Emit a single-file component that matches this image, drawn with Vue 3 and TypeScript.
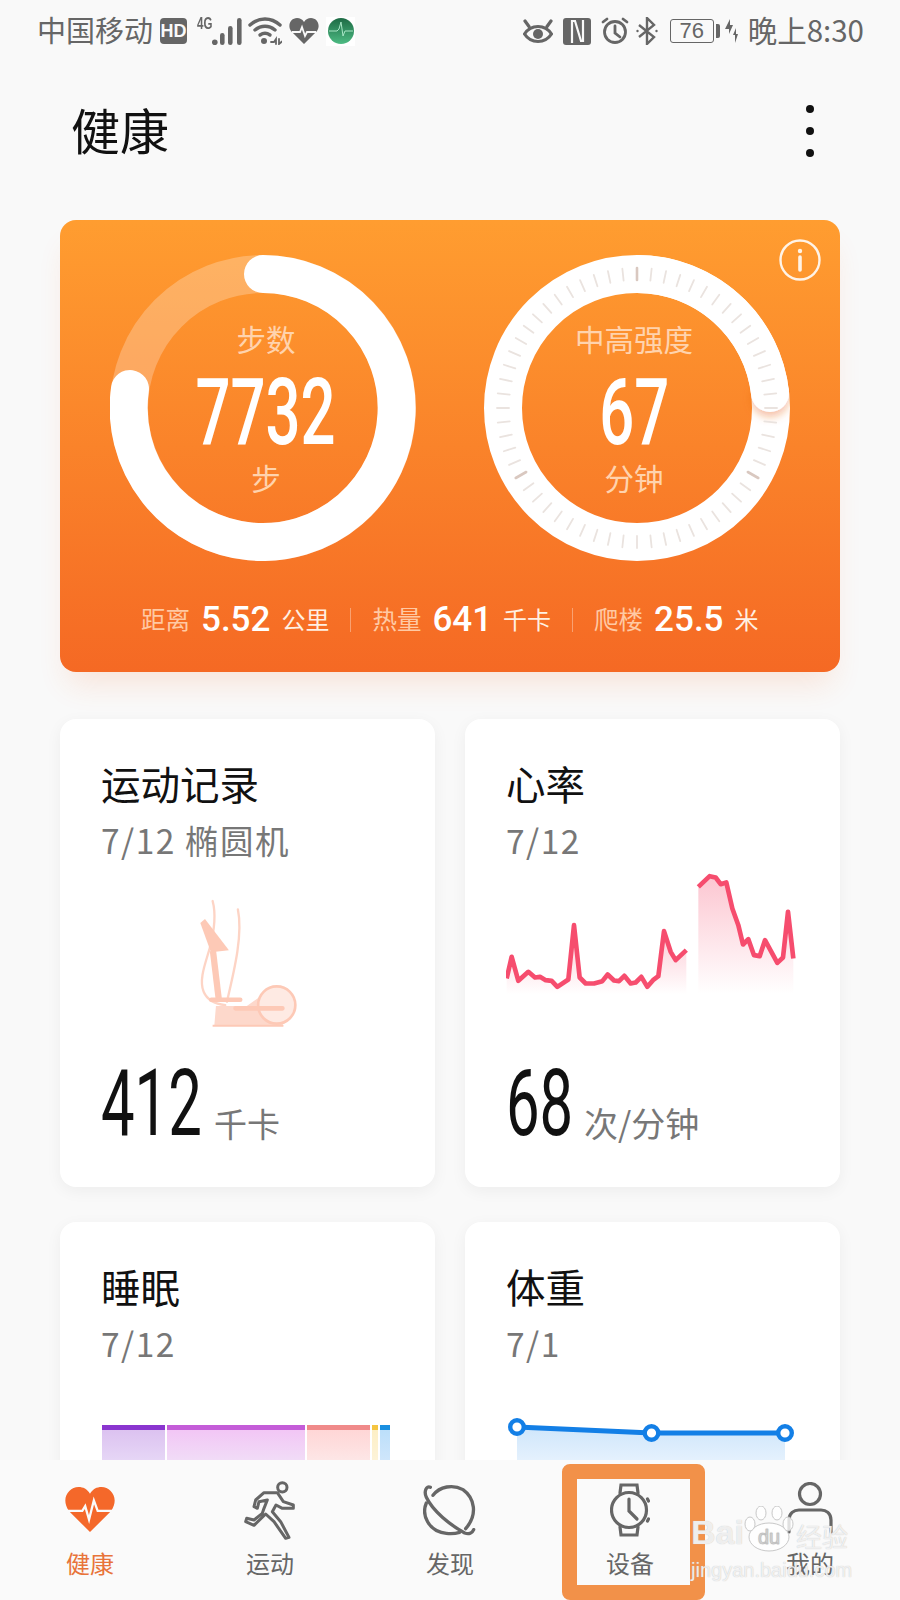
<script setup lang="ts">
interface Tick {
  x1: number
  y1: number
  x2: number
  y2: number
  major: boolean
}

const stats = [
  { label: '距离', value: '5.52', unit: '公里' },
  { label: '热量', value: '641', unit: '千卡' },
  { label: '爬楼', value: '25.5', unit: '米' },
]

// 60 ticks round the dial, heavier ones at 12, 4 and 8 o'clock
const ticks: Tick[] = Array.from({ length: 60 }, (_, i) => {
  const a = (i * 6 * Math.PI) / 180
  const s = Math.sin(a)
  const c = Math.cos(a)
  return {
    x1: 153 + 128 * s,
    y1: 153 - 128 * c,
    x2: 153 + 140 * s,
    y2: 153 - 140 * c,
    major: i % 20 === 0,
  }
})

const heartLeft =
  '113,385 128,320 148,392 178,365 198,382 213,380 230,390 248,392 265,410 298,388 315,225 332,382 350,400 375,400 400,393 416,373 435,391 450,393 466,377 485,400 500,397 517,380 535,410 552,390 568,378 585,243 605,305 620,330 652,300'
const heartRight =
  '688,110 722,78 740,82 755,102 772,97 790,175 808,225 822,283 838,267 855,315 872,318 888,270 925,338 942,322 957,185 973,325'

const sleepBars = [
  { width: 63, top: '#8a35cf', fill: '#dcc2f0', fade: '#e6d6f6' },
  { width: 138, top: '#c45cd8', fill: '#f2c6f5', fade: '#f1dcf7' },
  { width: 63, top: '#f08a8a', fill: '#ffd6d6', fade: '#fde6e6' },
  { width: 6, top: '#f5c540', fill: '#fdefc6', fade: '#fdf3d8' },
  { width: 10, top: '#1a8fe0', fill: '#bcdffa', fade: '#cfe6fb' },
]
</script>

<template>
  <div class="phone">
    <div class="status">
      <div class="status-side">
        <span class="carrier">中国移动</span>
        <span class="hd">HD</span>
        <span class="net">
          <i class="net-label">4G</i>
          <svg width="30" height="27" viewBox="0 0 30 27">
            <circle cx="2.8" cy="24.2" r="2.8" fill="#666" />
            <rect x="8" y="15" width="4.600" height="12" rx="2.300" fill="#666" />
            <rect x="16" y="8" width="4.600" height="19" rx="2.300" fill="#666" />
            <rect x="25" y="0" width="4.600" height="27" rx="2.300" fill="#666" />
          </svg>
        </span>
        <svg class="gap-wifi" width="34" height="28" viewBox="0 0 34 28" fill="none" stroke="#666" stroke-width="3.400" stroke-linecap="round">
          <path d="M2 8C11 0 23 0 32 8" />
          <path d="M7 13C13 8 21 8 27 13" />
          <path d="M12 18C15 16 19 16 22 18" />
          <circle cx="16" cy="24" r="3" fill="#666" stroke="none" />
          <path d="M23 25h3l2-3v5M31 22v5l3-2.500" stroke-width="1.800" />
        </svg>
        <svg width="30" height="26" viewBox="0 0 30 26">
          <path d="M15 26 2 13C-2 7 2 0 8 0c3 0 5 1 7 4 2-3 4-4 7-4 6 0 10 7 6 13Z" fill="#666" />
          <path d="M3 14h8l2-5 3 9 2-4h9" fill="none" stroke="#f9f9f9" stroke-width="1.800" />
        </svg>
        <span class="app-icon">
          <svg width="26" height="26" viewBox="0 0 26 26">
            <defs>
              <linearGradient id="radar" x1="0" y1="0" x2="0" y2="1">
                <stop offset="0" stop-color="#1d6a44" />
                <stop offset="1" stop-color="#4dbb83" />
              </linearGradient>
            </defs>
            <circle cx="13" cy="13" r="13" fill="url(#radar)" />
            <path d="M1 13h8l2-2 2-7 2 14 2-5h8" fill="none" stroke="#a8e6c6" stroke-width="1" />
          </svg>
        </span>
      </div>
      <div class="status-side">
        <svg width="30" height="27" viewBox="0 0 30 27" fill="none" stroke="#666" stroke-linecap="round">
          <path d="M1.500 16C8 6 22 6 28.500 16 22 26 8 26 1.500 16Z" stroke-width="3.200" />
          <circle cx="15" cy="16" r="5" fill="#666" stroke="none" />
          <path d="M2 3l4 5.500M28 3l-4 5.500" stroke-width="3.200" />
        </svg>
        <svg class="gap-n" width="28" height="27" viewBox="0 0 28 27">
          <rect width="28" height="27" rx="3" fill="#666" />
          <path d="M9 25V3h3l6 20h2V2" fill="none" stroke="#f9f9f9" stroke-width="2.200" />
        </svg>
        <svg class="gap-n" width="28" height="28" viewBox="0 0 28 28" fill="none" stroke="#666" stroke-width="2.800" stroke-linecap="round">
          <circle cx="14" cy="15" r="10.500" />
          <path d="M14 9v7l5 4M2 5l4-3M26 5l-4-3" />
        </svg>
        <svg class="gap-b" width="22" height="28" viewBox="0 0 22 28" fill="none" stroke="#666" stroke-width="2.400">
          <path d="M3 8l15 12-7 7V1l7 7L3 20" />
          <circle cx="1.500" cy="14" r="1.200" fill="#666" stroke="none" />
          <circle cx="20.500" cy="14" r="1.200" fill="#666" stroke="none" />
        </svg>
        <span class="battery">76</span>
        <i class="nub"></i>
        <svg class="bolts" width="15" height="24" viewBox="0 0 15 24" fill="#666">
          <path d="M6 0 1 10h4v5L9 6H6ZM12 9l-3 7h2v8l3-9h-2Z" />
        </svg>
        <span class="clock">晚上8:30</span>
      </div>
    </div>

    <header class="title-bar">
      <h1>健康</h1>
      <div class="more"><i></i><i></i><i></i></div>
    </header>

    <main class="content">
      <section class="hero">
        <svg class="info" width="42" height="42" viewBox="0 0 42 42" fill="none" stroke="#fff3e6" stroke-width="2.400">
          <circle cx="21" cy="21" r="19.500" />
          <path d="M21 18v13" stroke-width="3.600" stroke-linecap="round" />
          <circle cx="21" cy="12" r="2.200" fill="#fff3e6" stroke="none" />
        </svg>

        <div class="rings">
          <div class="ring">
            <svg width="306" height="306" viewBox="0 0 306 306" fill="none">
              <circle cx="153" cy="153" r="134" stroke="#fff" stroke-opacity=".25" stroke-width="38" />
              <path d="M153 19A134 134 0 1 1 20 134" stroke="#fff" stroke-width="38" stroke-linecap="round" />
            </svg>
            <div class="ring-text ring-steps">
              <span class="ring-label">步数</span>
              <span class="ring-num">7732</span>
              <span class="ring-label">步</span>
            </div>
          </div>

          <div class="ring">
            <svg width="306" height="306" viewBox="0 0 306 306" fill="none">
              <defs>
                <filter id="cap-shadow" x="-40%" y="-40%" width="180%" height="180%">
                  <feDropShadow dx="0" dy="5" stdDeviation="4" flood-color="#e8621a" flood-opacity=".4" />
                </filter>
              </defs>
              <circle cx="153" cy="153" r="134" stroke="#fff" stroke-width="38" />
              <circle cx="286" cy="138" r="19" fill="#fff" filter="url(#cap-shadow)" />
              <path d="M153 19A134 134 0 0 1 286 138" stroke="#fff" stroke-width="38" />
              <line
                v-for="(t, i) in ticks"
                :key="i"
                :x1="t.x1"
                :y1="t.y1"
                :x2="t.x2"
                :y2="t.y2"
                :stroke="t.major ? '#d9c8c0' : '#eae3df'"
                :stroke-width="t.major ? 2.600 : 1.800"
                stroke-linecap="round"
              />
            </svg>
            <div class="ring-text ring-minutes">
              <span class="ring-label">中高强度</span>
              <span class="ring-num">67</span>
              <span class="ring-label">分钟</span>
            </div>
          </div>
        </div>

        <div class="stats">
          <template v-for="(s, i) in stats" :key="s.label">
            <i v-if="i > 0" class="stat-sep"></i>
            <span class="stat-label">{{ s.label }}</span>
            <span class="stat-value">{{ s.value }}</span>
            <span class="stat-unit">{{ s.unit }}</span>
          </template>
        </div>
      </section>

      <div class="cards">
        <article class="card">
          <h2>运动记录</h2>
          <p class="sub">7/12 椭圆机</p>
          <svg class="machine" width="103" height="133" viewBox="440 50 310 400" fill="none" stroke="#fdc9b6">
            <path d="M487 62C500 110 490 160 478 205 465 250 445 300 460 335 470 358 495 372 525 375M563 87C578 160 555 260 530 365" stroke="#fdd4c5" stroke-width="7" stroke-linecap="round" />
            <path d="M450 128 464 116 536 210 482 216Z" fill="#fdc9b6" stroke="none" />
            <path d="M488 212 506 362" stroke-width="19" />
            <path d="M492 438 497 378H590L650 335 700 437Z" fill="#fdd8cb" stroke="none" />
            <circle cx="680" cy="375" r="56" fill="#feeae3" stroke="#fdc9b6" stroke-width="8" />
            <path d="M483 359H570M556 385H697" stroke-width="14" stroke-linecap="round" />
            <path d="M487 437H700" stroke-width="6" />
          </svg>
          <div class="metric">
            <span class="metric-num metric-three">412</span>
            <span class="metric-unit">千卡</span>
          </div>
        </article>

        <article class="card">
          <h2>心率</h2>
          <p class="sub">7/12</p>
          <svg class="heart-chart" width="290" height="127" viewBox="111 60 870 380" fill="none">
            <defs>
              <linearGradient id="heart-fill" x1="0" y1="0" x2="0" y2="1">
                <stop offset="0" stop-color="#f64d6e" stop-opacity=".32" />
                <stop offset="1" stop-color="#f64d6e" stop-opacity="0" />
              </linearGradient>
            </defs>
            <polygon :points="`${heartLeft} 652,432 113,432`" fill="url(#heart-fill)" />
            <polygon :points="`${heartRight} 973,432 688,432`" fill="url(#heart-fill)" />
            <polyline :points="heartLeft" stroke="#f64d6e" stroke-width="14" stroke-linejoin="round" />
            <polyline :points="heartRight" stroke="#f64d6e" stroke-width="14" stroke-linejoin="round" />
          </svg>
          <div class="metric metric-heart">
            <span class="metric-num metric-two">68</span>
            <span class="metric-unit">次/分钟</span>
          </div>
        </article>

        <article class="card">
          <h2>睡眠</h2>
          <p class="sub">7/12</p>
          <div class="sleep">
            <div
              v-for="b in sleepBars"
              :key="b.top"
              class="sleep-bar"
              :style="{
                width: b.width + 'px',
                background: `linear-gradient(${b.top} 5px, ${b.fill} 5px, ${b.fade} 35px)`,
              }"
            ></div>
          </div>
        </article>

        <article class="card">
          <h2>体重</h2>
          <p class="sub">7/1</p>
          <svg class="weight" width="300" height="70" viewBox="0 0 300 70" fill="none">
            <defs>
              <linearGradient id="weight-fill" x1="0" y1="0" x2="0" y2="1">
                <stop offset="0" stop-color="#cfe6fb" />
                <stop offset="1" stop-color="#eef6fe" />
              </linearGradient>
            </defs>
            <polygon points="11,12 145.500,18 279,18 279,60 11,60" fill="url(#weight-fill)" />
            <polyline points="11,12 145.500,18 279,18" stroke="#137fe6" stroke-width="5" />
            <g fill="#fff" stroke="#137fe6" stroke-width="4.400">
              <circle cx="11" cy="12" r="6.800" />
              <circle cx="145.500" cy="18" r="6.800" />
              <circle cx="279" cy="18" r="6.800" />
            </g>
          </svg>
        </article>
      </div>
    </main>

    <nav class="tabs">
      <div class="tab active">
        <div class="tab-icon">
          <svg width="54" height="48" viewBox="0 0 54 50">
            <path d="M27 48 5 26C-4 13 5 1 15 1c5 0 9 2 12 7 3-5 7-7 12-7 10 0 19 12 10 25Z" fill="#f4682a" />
            <path d="M0 26h19l3-5 4 14 5-20 4 11h19" fill="none" stroke="#fafafa" stroke-width="2.400" />
          </svg>
        </div>
        <span>健康</span>
      </div>
      <div class="tab">
        <div class="tab-icon">
          <svg width="52" height="60" viewBox="730 90 156 180" fill="none" stroke="#666" stroke-width="9" stroke-linejoin="round">
            <circle cx="845" cy="112" r="14" />
            <path d="M765 150 790 128H830L848 155 878 165V175H845L826 165 815 185 840 215 865 262 855 265 820 215 795 192 760 226 735 215 738 205 760 210 785 190 790 175 800 150 775 155 770 175 760 170Z" />
          </svg>
        </div>
        <span>运动</span>
      </div>
      <div class="tab">
        <div class="tab-icon">
          <svg width="55" height="55" viewBox="40 35 165 165" fill="none" stroke="#666" stroke-width="10" stroke-linecap="round">
            <path d="M70 72C90 45 130 38 160 55 195 80 205 130 168 172" />
            <path d="M62 48C50 42 42 60 50 78 70 120 120 160 165 185 178 190 188 185 192 175" />
            <path d="M50 95C35 130 55 180 110 186 125 188 140 186 150 183" />
          </svg>
        </div>
        <span>发现</span>
      </div>
      <div class="tab">
        <div class="tab-icon">
          <svg width="40" height="54" viewBox="0 0 40 54" fill="none" stroke="#666" stroke-width="3.200" stroke-linecap="round">
            <circle cx="19" cy="27" r="17.500" />
            <path d="M10 10 11 2H27L28 10M10 44 11 52H27L28 44" />
            <path d="M19 16V28L27 36" />
            <path d="M37.500 16 38.500 18M37.500 38 38.500 36" />
          </svg>
        </div>
        <span>设备</span>
      </div>
      <div class="tab">
        <div class="tab-icon">
          <svg width="46" height="56" viewBox="0 0 46 56" fill="none" stroke="#666" stroke-width="3.200" stroke-linecap="round">
            <circle cx="23" cy="12" r="10.500" />
            <path d="M2 50V38C2 31 7 28 12 28H34C39 28 44 31 44 38V50" />
          </svg>
        </div>
        <span>我的</span>
      </div>
      <div class="highlight"></div>
      <div class="watermark">
        <div class="wm-top">
          <span class="wm-bai">Bai</span>
          <svg width="50" height="46" viewBox="0 0 50 46" stroke="#c8c8c8" stroke-width="1" fill="#fff" fill-opacity=".8">
            <ellipse cx="25" cy="31" rx="20" ry="14" />
            <ellipse cx="6" cy="18" rx="5" ry="7" />
            <ellipse cx="17" cy="7" rx="5" ry="7" />
            <ellipse cx="33" cy="7" rx="5" ry="7" />
            <ellipse cx="44" cy="18" rx="5" ry="7" />
            <text x="25" y="38" text-anchor="middle" font-family="Liberation Sans" font-size="20" fill="#ddd" stroke="#bbb" stroke-width=".5">du</text>
          </svg>
          <span class="wm-cn">经验</span>
        </div>
        <div class="wm-url">jingyan.baidu.com</div>
      </div>
    </nav>
  </div>
</template>

<style scoped>
.phone {
  width: 900px;
  height: 1600px;
  display: flex;
  flex-direction: column;
  overflow: hidden;
  background: #f9f9f9;
  font-family: 'Noto Sans CJK SC', 'Liberation Sans', sans-serif;
  color: #111;
}

.status {
  height: 62px;
  padding: 0 36px 0 37px;
  display: flex;
  justify-content: space-between;
  align-items: center;
  color: #666;
}

.status-side {
  display: flex;
  align-items: center;
}

.carrier {
  margin-top: -4px;
  font-size: 29px;
  line-height: 36px;
}

.hd {
  width: 27px;
  height: 26px;
  margin-left: 7px;
  border-radius: 4px;
  background: #666;
  color: #f9f9f9;
  font: 700 18px/26px 'Liberation Sans', sans-serif;
  text-align: center;
}

.net {
  display: flex;
  align-items: flex-end;
  height: 28px;
  margin-left: 10px;
}

.net-label {
  width: 15px;
  font: 700 16px/13px 'Liberation Sans', sans-serif;
  font-style: normal;
  align-self: flex-start;
  transform: scaleX(0.72);
  transform-origin: left;
}

.gap-wifi {
  margin: 0 7px 0 6px;
}

.app-icon {
  width: 29px;
  height: 29px;
  margin-left: 7px;
  background: #fff;
  display: flex;
  align-items: center;
  justify-content: center;
}

.gap-n {
  margin-left: 10px;
}

.gap-b {
  margin-left: 7px;
}

.battery {
  width: 44px;
  height: 24px;
  margin-left: 12px;
  border: 1px solid #666;
  border-radius: 3px;
  box-sizing: border-box;
  font: 22px/22px 'Liberation Sans', sans-serif;
  text-align: center;
}

.nub {
  width: 4px;
  height: 14px;
  margin-left: 2px;
  border-radius: 0 2px 2px 0;
  background: #666;
}

.bolts {
  margin-left: 4px;
}

.clock {
  margin: -4px 0 0 9px;
  font-size: 29.500px;
  line-height: 36px;
}

.title-bar {
  height: 158px;
  padding: 0 60px 0 71px;
  box-sizing: border-box;
  display: flex;
  justify-content: space-between;
  align-items: flex-start;
}

h1 {
  margin: 38px 0 0;
  font-size: 49px;
  font-weight: 400;
  line-height: 58px;
}

.more {
  display: flex;
  flex-direction: column;
  gap: 14px;
  margin: 43px 26px 0 0;
}

.more i {
  width: 8px;
  height: 8px;
  border-radius: 50%;
  background: #111;
}

.content {
  flex: 1;
  min-height: 0;
  overflow: hidden;
  padding: 0 60px;
}

.hero {
  position: relative;
  height: 452px;
  box-sizing: border-box;
  padding-top: 35px;
  border-radius: 16px;
  background: linear-gradient(#ff9d30, #f56924);
  box-shadow: 0 20px 30px -8px rgba(245, 105, 36, 0.14);
}

.info {
  position: absolute;
  top: 19px;
  right: 19px;
}

.rings {
  display: flex;
  padding-left: 50px;
  gap: 68px;
}

.ring {
  position: relative;
  width: 306px;
  height: 306px;
}

.ring > svg {
  display: block;
}

.ring-text {
  position: absolute;
  inset: 0;
  display: flex;
  flex-direction: column;
  align-items: center;
  padding-top: 65px;
  box-sizing: border-box;
}

.ring-steps {
  left: 6px;
}

.ring-minutes {
  right: 6px;
}

.ring-label {
  font-size: 29.500px;
  line-height: 36px;
  color: #ffd3ad;
}

.ring-num {
  margin-top: 5px;
  height: 98px;
  font: 500 92px/104px Roboto, sans-serif;
  color: #fff;
  transform: scaleX(0.67);
}

.stats {
  display: flex;
  align-items: center;
  height: 44px;
  margin-top: 37px;
  padding-left: 81px;
}

.stat-label {
  margin-top: -3px;
  font-size: 24.500px;
  color: #ffc9a3;
}

.stat-value {
  margin: 0 11px;
  font: 500 35px/44px Roboto, sans-serif;
  color: #fff;
}

.stat-unit {
  margin-top: -3px;
  font-size: 24px;
  color: #fff0e2;
}

.stat-sep {
  width: 1px;
  height: 24px;
  margin: 0 21px;
  background: rgba(255, 255, 255, 0.35);
}

.cards {
  display: grid;
  grid-template-columns: 375px 375px;
  gap: 35px 30px;
  margin-top: 47px;
}

.card {
  height: 468px;
  box-sizing: border-box;
  padding: 39px 41px 0;
  border-radius: 16px;
  background: #fff;
  box-shadow: 0 4px 16px rgba(0, 0, 0, 0.05);
}

h2 {
  margin: 0;
  font-size: 39.500px;
  font-weight: 400;
  line-height: 50px;
}

.sub {
  margin: 10px 0 0;
  font-size: 33.500px;
  letter-spacing: 1.500px;
  line-height: 44px;
  color: #777;
}

.machine {
  display: block;
  margin: 35px 0 0 96px;
}

.metric {
  display: flex;
  align-items: flex-end;
  margin-top: 28px;
}

.metric-heart {
  margin-top: 61px;
}

.metric-num {
  display: block;
  height: 92px;
  font: 400 92px/92px Roboto, sans-serif;
  transform: scaleX(0.65);
  transform-origin: left;
}

.metric-three {
  width: 113px;
}

.metric-two {
  width: 78px;
}

.metric-unit {
  margin-bottom: 5px;
  font-size: 33px;
  line-height: 44px;
  color: #777;
}

.metric-two + .metric-unit {
  font-size: 34px;
}

.heart-chart {
  display: block;
  margin: 8px 0 0 0;
}

.sleep {
  display: flex;
  gap: 2px;
  margin: 60px 0 0 1px;
  height: 60px;
}

.sleep-bar {
  height: 100%;
}

.weight {
  display: block;
  margin: 50px 0 0 0;
}

.tabs {
  position: relative;
  height: 140px;
  flex: none;
  display: flex;
  background: #fafafa;
}

.tab {
  width: 180px;
  height: 140px;
  display: flex;
  flex-direction: column;
  align-items: center;
  font-size: 24px;
  line-height: 30px;
  color: #666;
}

.tab-icon {
  height: 60px;
  margin-top: 20px;
  display: flex;
  align-items: center;
}

.tab span {
  margin-top: 8px;
}

.tab.active {
  color: #e8743a;
}

.highlight {
  position: absolute;
  left: 562px;
  top: 4px;
  width: 143px;
  height: 136px;
  box-sizing: border-box;
  border: 15px solid #f29149;
  border-radius: 8px;
}

.watermark {
  position: absolute;
  left: 691px;
  top: 45px;
  width: 165px;
  color: rgba(255, 255, 255, 0.75);
  text-shadow: 0 0 1px #bbb;
  pointer-events: none;
}

.wm-top {
  display: flex;
  align-items: flex-end;
  height: 47px;
}

.wm-bai {
  font: 700 34px/40px 'Liberation Sans', sans-serif;
  margin-right: 0;
}

.wm-cn {
  margin: 0 0 -1px 2px;
  font-size: 26px;
  line-height: 34px;
}

.wm-url {
  margin-top: 6px;
  font: 20px/24px 'Liberation Sans', sans-serif;
}
</style>
